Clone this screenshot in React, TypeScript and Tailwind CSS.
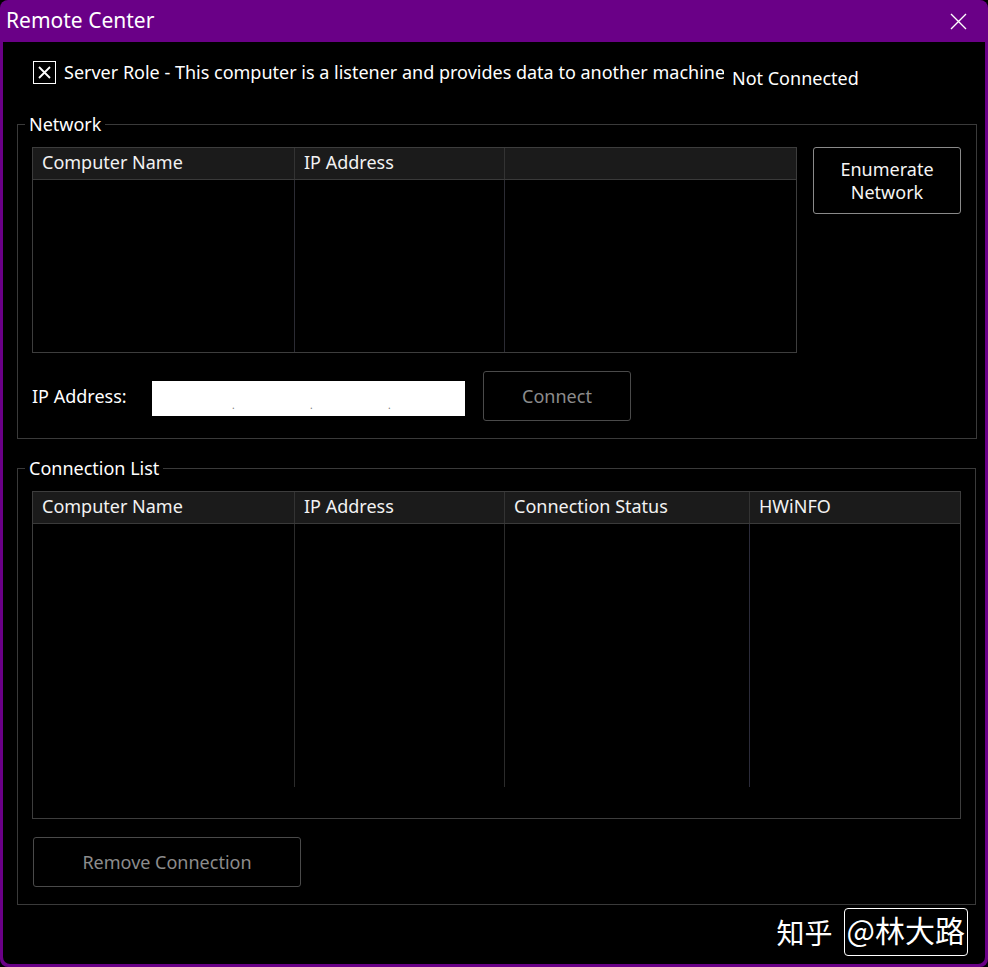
import React from 'react';

const font = {fontFamily: '"Noto Sans", "Open Sans", Arial, sans-serif'};

const HeaderCell = ({label, w}: {label: string, w?: string}) => (
  <div className={`${w ?? 'flex-1'} h-full flex items-center pl-[9px] pb-[3px] border-r border-[#333] last:border-r-0 text-[#f2f2f2]`}>
    {label}
  </div>
)

const ListTable = ({cols, height, colHeight}: {cols: {label: string, w?: string}[], height: string, colHeight: string}) => (
  <div className={`flex flex-col border border-[#3d3d3d] ${height}`}>
    <div className="flex h-[32px] bg-[#1b1b1b] border-b border-[#3a3a3a] shrink-0">
      {cols.map(c => <HeaderCell key={c.label + c.w} label={c.label} w={c.w} />)}
    </div>
    <div className={`flex ${colHeight}`}>
      {cols.map((c, i) => (
        <div key={i} className={`${c.w ?? 'flex-1'} h-full ${i < cols.length - 1 ? 'border-r border-[#2b2b33]' : ''}`} />
      ))}
    </div>
  </div>
)

const WinButton = ({children, className, disabled}: {children: React.ReactNode, className: string, disabled?: boolean}) => (
  <button className={`rounded-[3px] border flex items-center justify-center leading-[23px] ${disabled ? 'border-[#4a4a4a] text-[#8c8c8c]' : 'border-[#8a8a8a] text-[#f5f5f5]'} ${className}`}>
    {children}
  </button>
)

export default function App() {
  return (
    <div className="w-[988px] h-[967px] bg-black text-[18px]" style={font}>
      <div className="w-full h-full flex flex-col bg-[#6a0087] rounded-[8px] overflow-hidden">
        {/* title bar */}
        <div className="h-[42px] flex items-center justify-between pl-[6px] pr-[21px] shrink-0">
          <span className="text-white text-[21px]">Remote Center</span>
          <svg width="17" height="17" viewBox="0 0 17 17">
            <path d="M1 1 L16 16 M16 1 L1 16" stroke="#fff" strokeWidth="1.4" />
          </svg>
        </div>

        <div className="flex-1 bg-black mx-[3px] mb-[3px] rounded-b-[7px] flex flex-col text-white">
          {/* server role row */}
          <div className="flex items-start pl-[30px] pt-[19px] h-[71px]">
            <div className="w-[23px] h-[23px] border border-white flex items-center justify-center shrink-0">
              <svg width="13" height="13" viewBox="0 0 13 13">
                <path d="M1 1 L12 12 M12 1 L1 12" stroke="#fff" strokeWidth="1.8" />
              </svg>
            </div>
            <div className="ml-[8px] w-[660px] overflow-hidden whitespace-nowrap leading-[23px]">
              Server Role - This computer is a listener and provides data to another machine
            </div>
            <div className="ml-[8px] mt-[6px] leading-[23px] whitespace-nowrap">Not Connected</div>
          </div>

          {/* network group */}
          <fieldset className="ml-[14px] mr-[9px] border border-[#3a3a3a] pl-[14px] pr-[15px] pt-[12px] pb-[17px]">
            <legend className="-ml-[7px] px-[4px] leading-[22px]">Network</legend>
            <div className="flex items-start gap-[16px]">
              <div className="w-[765px]">
                <ListTable
                  height="h-[206px]"
                  colHeight="flex-1"
                  cols={[{label: 'Computer Name', w: 'w-[262px]'}, {label: 'IP Address', w: 'w-[210px]'}, {label: ''}]}
                />
              </div>
              <WinButton className="w-[148px] h-[67px] flex-col">
                <span>Enumerate</span>
                <span>Network</span>
              </WinButton>
            </div>
            <div className="flex items-center mt-[18px]">
              <span className="w-[120px]">IP Address:</span>
              <div className="w-[313px] h-[35px] mt-[5px] bg-white flex items-end pb-[6px] pl-[80px] text-[#7a7a7a] text-[10px] leading-none">
                <span className="w-[78px]">.</span>
                <span className="w-[78px]">.</span>
                <span>.</span>
              </div>
              <WinButton disabled className="ml-[18px] w-[148px] h-[50px]">Connect</WinButton>
            </div>
          </fieldset>

          {/* connection list group */}
          <fieldset className="ml-[14px] mr-[9px] mt-[18px] border border-[#3a3a3a] pl-[14px] pr-[14px] pt-[12px] pb-[17px]">
            <legend className="-ml-[7px] px-[4px] leading-[22px]">Connection List</legend>
            <div className="flex flex-col border border-[#3d3d3d] h-[328px]">
              <div className="flex h-[32px] bg-[#1b1b1b] border-b border-[#3a3a3a] shrink-0">
                <HeaderCell label="Computer Name" w="w-[262px]" />
                <HeaderCell label="IP Address" w="w-[210px]" />
                <HeaderCell label="Connection Status" w="w-[245px]" />
                <HeaderCell label="HWiNFO" />
              </div>
              <div className="flex h-[263px]">
                <div className="w-[262px] border-r border-[#2b2b2b]" />
                <div className="w-[210px] border-r border-[#2b2b2b]" />
                <div className="w-[245px] border-r border-[#2b2b3a]" />
                <div className="flex-1" />
              </div>
            </div>
            <WinButton disabled className="mt-[18px] ml-[1px] w-[268px] h-[50px]">Remove Connection</WinButton>
          </fieldset>

          {/* watermark */}
          <div className="flex justify-end items-center pr-[17px] mt-[3px]" style={{fontFamily: '"Noto Sans CJK SC", sans-serif'}}>
            <span className="text-[28px] text-white mr-[11px] leading-none">知乎</span>
            <div className="border border-white rounded-[4px] h-[48px] px-[2px] pb-[6px] flex items-center text-[30px] text-white leading-none">
              @林大路
            </div>
          </div>
        </div>
      </div>
    </div>
  )
}
